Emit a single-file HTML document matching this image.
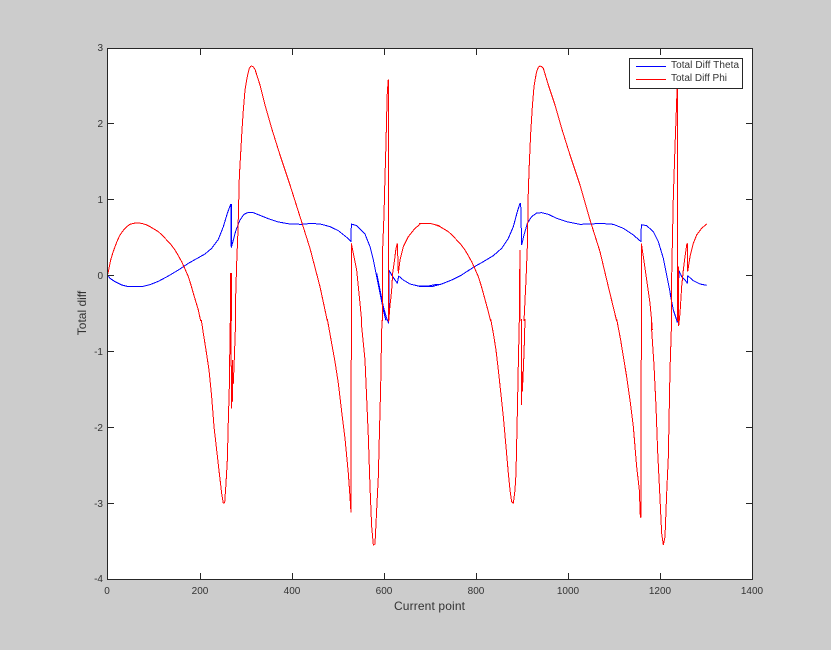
<!DOCTYPE html>
<html>
<head>
<meta charset="utf-8">
<style>
html,body{margin:0;padding:0;background:#ccc;width:831px;height:650px;overflow:hidden}
svg{display:block}
text{font-family:"Liberation Sans",sans-serif;fill:#333}
.t{font-size:10px}
polyline{fill:none;stroke-width:1;vector-effect:non-scaling-stroke;shape-rendering:crispEdges;stroke-linejoin:bevel}
.b polyline{stroke:#00f}
.r polyline{stroke:#f00}
</style>
</head>
<body>
<svg width="831" height="650" viewBox="0 0 831 650" xmlns="http://www.w3.org/2000/svg">
<rect x="0" y="0" width="831" height="650" fill="#ccc"/>
<rect x="107.5" y="48.5" width="645" height="531" fill="#fff"/>

<g class="b">
<g transform="translate(90,30) scale(.33333)">
<polyline points="52,733 60,745 75,755 95,765 115,770 155,770 180,764 205,754 235,738 265,720 295,700 320,686 345,672 365,655 385,628 400,590 412,550 422,523 424,523 424,653 430,630 438,600 450,570 462,553 475,547 490,548 510,556 535,566 565,576 600,582 635,583 665,580 695,583 720,590 745,602 770,622 783,635 784,582 800,587 825,612 840,650 850,690 860,740 870,790 880,840 888,872"/>
<polyline points="423,523 423,650"/>
</g>
<g transform="translate(340,190) scale(.33333)">
<polyline points="110,250 120,300 130,350 140,385 146,400 147,240 155,255 165,270 172,280 176,258 190,270 210,282 235,288 265,288 285,284 300,283"/>
</g>
<g transform="translate(420,30) scale(.33333)">
<polyline points="-3,770 35,770 65,762 95,750 125,735 160,712 190,695 220,677 245,655 265,625 280,590 292,545 300,520 302,520 305,645 312,615 322,580 335,560 350,549 365,548 385,553 410,565 440,575 480,583 515,582 540,580 580,583 610,595 640,615 663,635 664,584 680,587 700,605 715,635 730,685 745,760 755,810"/>
</g>
<g transform="translate(630,200) scale(.33333)">
<polyline points="120,280 130,330 140,360 142,368 147,212 155,230 165,240 172,250 173,227 190,242 210,252 230,256"/>
</g>
</g>

<g class="r">
<g transform="translate(90,30) scale(.33333)">
<polyline points="52,738 55,725 62,690 68,670 75,650 82,632 90,615 100,601 110,590 120,583 130,580 142,579 155,580 168,584 180,590 205,605 218,617 230,630 243,644 255,660 265,677 275,695 285,717 295,740 303,765 310,790 325,840 332,873"/>
<polyline points="437,873 437,800 440,700 444,600 448,440 452,370 456,300 460,240 465,180 470,150 474,130 478,115 482,109 485,108 490,111 495,118 502,140 510,165 525,225 545,295 570,375 600,465 630,560 660,655 690,770 712,873"/>
<polyline points="784,873 784,640 790,670 800,720 810,820 815,873"/>
<polyline points="877,873 877,680 882,555 885,440 888,340 890,255 892,185 895,148 895,873"/>
<polyline points="421,873 421,730 425,730 425,873"/>
<polyline points="423,873 423,730"/>
<polyline points="922,640 925,730 930,690 940,650 955,620 975,595 990,583"/>
</g>
<g transform="translate(60,320) scale(.33333)">
<polyline points="424,0 430,40 438,90 447,150 455,230 462,320 470,390 478,460 485,520 490,550 494,548 498,490 502,420 505,300 508,200 510,50 511,-3"/>
<polyline points="513,-3 513,60 515,265 517,120 517,245 517,190 520,190 523,115 526,30 527,-3"/>
<polyline points="802,-3 815,70 825,125 835,190 845,275 855,355 865,460 870,530 873,578 874,-3"/>
<polyline points="905,-3 905,20 915,120 925,350 930,500 935,620 940,675 945,672 950,570 955,470 958,350 962,200 965,30 967,-3"/>
</g>
<g transform="translate(340,190) scale(.33333)">
<polyline points="146,200 146,395 150,345 152,330 155,300 158,250 163,215 168,175 172,160"/>
<polyline points="240,100 270,100 300,108"/>
</g>
<g transform="translate(420,30) scale(.33333)">
<polyline points="-3,580 30,580 45,584 60,590 85,605 98,617 110,630 123,644 135,660 145,677 155,695 165,717 175,740 183,765 190,790 205,845 212,873"/>
<polyline points="298,873 298,820 300,660 300,873"/>
<polyline points="312,873 318,750 322,650 325,480 328,400 332,310 337,230 342,170 346,145 350,125 355,112 360,108 365,110 370,115 385,165 405,225 425,295 450,375 480,465 510,570 540,665 565,770 590,873"/>
<polyline points="664,873 664,640 670,680 680,750 690,820 695,873 697,900"/>
<polyline points="755,873 755,740 760,500 765,350 770,215 772,147 772,873"/>
</g>
<g transform="translate(410,320) scale(.33333)">
<polyline points="242,-3 250,40 258,90 265,150 272,215 280,290 288,380 295,460 300,510 305,545 310,550 315,510 318,460 322,280 325,130 328,-3"/>
<polyline points="334,-3 334,255 337,155 337,215 340,150 343,70 345,-3"/>
<polyline points="620,-3 632,60 640,110 650,170 660,240 670,320 680,440 688,510 691,590 693,593 694,-3"/>
<polyline points="724,0 725,30 732,135 738,260 743,395 750,535 755,640 760,675 765,650 770,520 775,410 780,150 785,-3"/>
</g>
<g transform="translate(630,200) scale(.33333)">
<polyline points="146,200 146,378 150,340 155,260 160,210 165,170 170,135 172,130 173,215 180,170 190,130 200,105 215,85 230,72"/>
</g>
</g>

<rect x="107.5" y="48.5" width="645" height="531" fill="none" stroke="#262626" stroke-width="1" shape-rendering="crispEdges"/>
<path d="M200.5 49v6M292.5 49v6M384.5 49v6M476.5 49v6M568.5 49v6M660.5 49v6M200.5 579v-6M292.5 579v-6M384.5 579v-6M476.5 579v-6M568.5 579v-6M660.5 579v-6M108 123.5h6M108 199.5h6M108 275.5h6M108 351.5h6M108 427.5h6M108 503.5h6M752 123.5h-6M752 199.5h-6M752 275.5h-6M752 351.5h-6M752 427.5h-6M752 503.5h-6" stroke="#262626" stroke-width="1" fill="none" shape-rendering="crispEdges"/>

<rect x="629.5" y="58.5" width="113" height="30" fill="#fff" stroke="#262626" stroke-width="1" shape-rendering="crispEdges"/>
<path d="M636 66.5h30" stroke="#00f" shape-rendering="crispEdges"/>
<path d="M636 79.5h30" stroke="#f00" shape-rendering="crispEdges"/>
<text class="t" x="671" y="68" textLength="68" lengthAdjust="spacing">Total Diff Theta</text>
<text class="t" x="671" y="81" textLength="56" lengthAdjust="spacing">Total Diff Phi</text>

<g text-anchor="end">
<text class="t" x="103" y="51">3</text>
<text class="t" x="103" y="127">2</text>
<text class="t" x="103" y="203">1</text>
<text class="t" x="103" y="279">0</text>
<text class="t" x="103" y="355">-1</text>
<text class="t" x="103" y="431">-2</text>
<text class="t" x="103" y="507">-3</text>
<text class="t" x="103" y="582">-4</text>
</g>
<g text-anchor="middle">
<text class="t" x="107" y="594">0</text>
<text class="t" x="200" y="594">200</text>
<text class="t" x="292" y="594">400</text>
<text class="t" x="384" y="594">600</text>
<text class="t" x="476" y="594">800</text>
<text class="t" x="568" y="594">1000</text>
<text class="t" x="660" y="594">1200</text>
<text class="t" x="752" y="594">1400</text>
</g>
<text x="429.5" y="610" font-size="12" text-anchor="middle" textLength="71" lengthAdjust="spacing">Current point</text>
<text transform="translate(86,313) rotate(-90)" font-size="12" text-anchor="middle">Total diff</text>
</svg>
</body>
</html>
